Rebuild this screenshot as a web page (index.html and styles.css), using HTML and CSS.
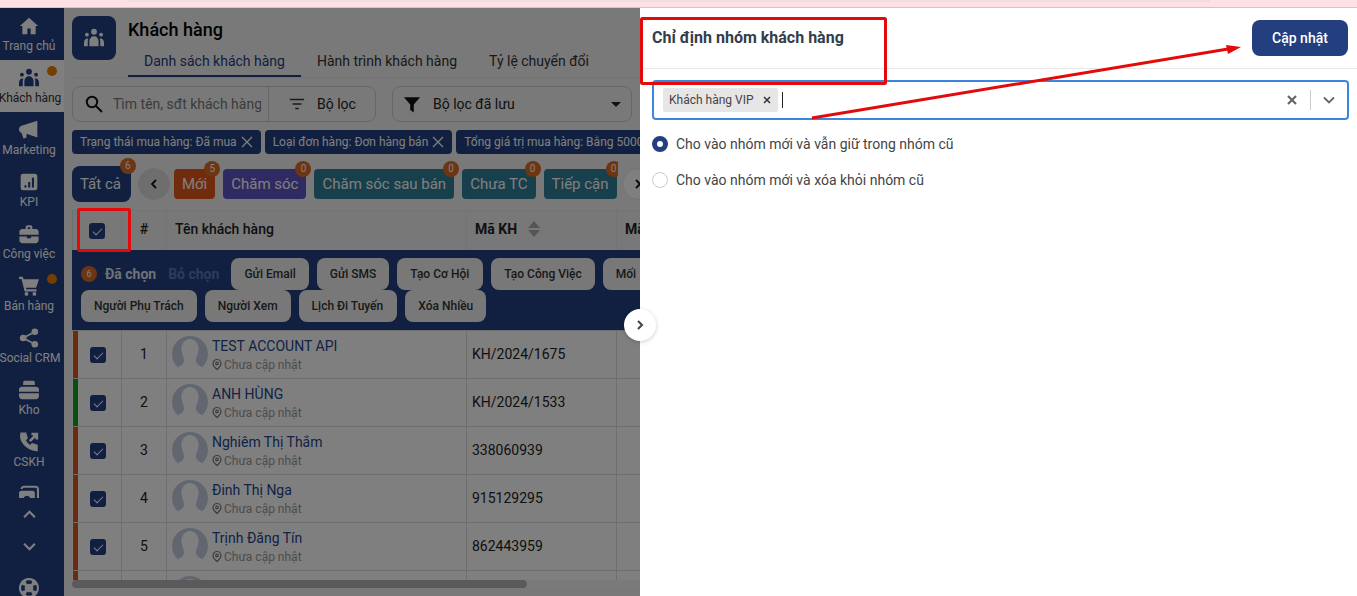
FILE: index.html
```html
<!DOCTYPE html>
<html lang="en">
<head>
  <meta charset="UTF-8">
  <meta name="viewport" content="width=device-width, initial-scale=1.0">
  <title>Khách hàng</title>
  <link rel="stylesheet" href="styles.css">
</head>
<body>
  <div class="notice"><div class="notice-bar"></div></div>

  <div class="app">
    <svg class="defs" aria-hidden="true">
      <symbol id="face" viewBox="0 0 36 36">
        <circle cx="18" cy="18" r="18" fill="#c3cde0"/>
        <path fill="#fff" d="M18 3C12.500 3 9 8 9.500 14c.4 5 3 8 2.500 11.500-.4 2.500-3 4.500-6 5.500v5h24v-5c-3-1-5.600-3-6-5.500-.5-3.500 2.100-6.500 2.500-11.500C27 8 23.500 3 18 3z"/>
      </symbol>
      <symbol id="pin" viewBox="0 0 10 12">
        <path d="M5 1a4 4 0 0 1 4 4c0 2.500-4 6-4 6S1 7.500 1 5a4 4 0 0 1 4-4z"/>
        <circle cx="5" cy="5" r="1.300"/>
      </symbol>
      <symbol id="team" viewBox="0 0 24 24">
        <circle cx="12" cy="4.500" r="3.500"/>
        <circle cx="3.500" cy="8" r="2.300"/>
        <circle cx="20.500" cy="8" r="2.300"/>
        <path d="M6.500 22v-6c0-3.500 2.500-6 5.500-6s5.500 2.500 5.500 6v6zM0 22v-4C0 14.500 1.500 12.500 4.500 12.500c.3 0 .5 0 .7.100-.5 1.200-.7 2.500-.7 3.900v5.500zM24 22v-4c0-3.500-1.500-5.500-4.500-5.500-.3 0-.5 0-.7.100.5 1.200.7 2.500.7 3.900v5.500z"/>
      </symbol>
    </svg>

    <nav class="sidebar">
      <a class="nav-item">
        <svg viewBox="0 0 24 24"><path d="M12 2 1 12h3v10h6v-7h4v7h6V12h3z"/></svg>
        <span>Trang chủ</span>
      </a>
      <a class="nav-item active wide">
        <i class="nav-dot"></i>
        <svg class="nav-team"><use href="#team"/></svg>
        <span>Khách hàng</span>
      </a>
      <a class="nav-item">
        <svg viewBox="0 0 24 24"><path d="M22 1v20L9 16.500V21l-3.500 1.500L3 15.500C1 14.500 0 13 0 11s1.500-4 4-4.500z"/></svg>
        <span>Marketing</span>
      </a>
      <a class="nav-item">
        <svg viewBox="0 0 24 24"><path fill-rule="evenodd" d="M5 2h14c2 0 3 1 3 3v14c0 2-1 3-3 3H5c-2 0-3-1-3-3V5c0-2 1-3 3-3zm1.500 14v2.500h2.500V16zm4.500-4v6.500h2.500V12zm4.500-5v11.500H18V7z"/></svg>
        <span>KPI</span>
      </a>
      <a class="nav-item">
        <svg viewBox="0 0 24 24"><path fill-rule="evenodd" d="M8 6V4c0-1.500 1-2.500 2.500-2.500h3C15 1.500 16 2.500 16 4v2h4c2 0 3.500 1.500 3.500 3.500V13H.5V9.500C.5 7.500 2 6 4 6zm2.500 0h3V4h-3zM.5 15h9v2h5v-2h9v4.500c0 2-1.500 3.500-3.500 3.500H4c-2 0-3.500-1.500-3.500-3.500z"/></svg>
        <span>Công việc</span>
      </a>
      <a class="nav-item">
        <i class="nav-dot"></i>
        <svg viewBox="0 0 24 24"><path d="M0 1h4.500l1 3H24l-3.500 10H8.300l.5 2H21v2.500H6.800L3 3.500H0z"/><circle cx="9" cy="21.500" r="2.300"/><circle cx="18.500" cy="21.500" r="2.300"/></svg>
        <span>Bán hàng</span>
      </a>
      <a class="nav-item wide">
        <svg viewBox="0 0 24 24"><circle cx="19" cy="4.500" r="4"/><circle cx="5" cy="12" r="4"/><circle cx="19" cy="19.500" r="4"/><path d="M5 12 19 4.500M5 12l14 7.500" fill="none" stroke="currentColor" stroke-width="2.200"/></svg>
        <span>Social CRM</span>
      </a>
      <a class="nav-item">
        <svg viewBox="0 0 24 24"><path d="M7 1h10c1.500 0 2 1 2 2v3H5V3c0-1 .5-2 2-2zM4 8h16c2.500 0 4 1.500 4 3.500V14H0v-2.500C0 9.500 1.500 8 4 8zM0 16h24v2.500c0 2.500-1.500 4.500-4 4.500H4c-2.500 0-4-2-4-4.500z"/></svg>
        <span>Kho</span>
      </a>
      <a class="nav-item">
        <svg viewBox="0 0 24 24" fill="none" stroke="currentColor" stroke-width="3"><path d="M3 2c-1.500 9 6 18.500 18 19.500v-5l-5-1.500-2.500 2.500C10 15.500 8 13 6.500 9.500L9 7 7.500 2z"/><path d="M13 11l8-8M15 2.500h6.500V9"/></svg>
        <span>CSKH</span>
      </a>
      <a class="nav-item nav-clipped">
        <svg viewBox="0 0 24 24"><path fill-rule="evenodd" d="M6 2h14c2.500 0 4 1.500 4 4v12h-2.500V6c0-1-.5-1.500-1.500-1.500H6C5 4.500 4.500 5 4.500 6H2c0-2.500 1.500-4 4-4zM3 8h13c2.500 0 3 1.500 3 3v9H0v-9c0-1.500 1-3 3-3zm6.500 6a4 4 0 1 0 .1 0z"/></svg>
      </a>
      <div class="nav-arrows">
        <svg viewBox="0 0 16 10"><path d="M2 8l6-6 6 6"/></svg>
        <svg viewBox="0 0 16 10"><path d="M2 2l6 6 6-6"/></svg>
      </div>
      <div class="nav-help">
        <svg viewBox="0 0 24 24"><path fill-rule="evenodd" d="M12 0a12 12 0 1 1-.1 0zm-4 3.500 1.500 4a5 5 0 0 1 5 0l1.500-4a9.500 9.500 0 0 0-8 0zM3.500 8a9.500 9.500 0 0 0 0 8l4-1.500a5 5 0 0 1 0-5zm17 0-4 1.500a5 5 0 0 1 0 5l4 1.500a9.500 9.500 0 0 0 0-8zm-11 8.500-1.500 4a9.500 9.500 0 0 0 8 0l-1.500-4a5 5 0 0 1-5 0z"/></svg>
      </div>
    </nav>

    <main class="main">
      <header class="page-head">
        <div class="page-icon">
          <svg><use href="#team"/></svg>
        </div>
        <div class="page-title">
          <h1>Khách hàng</h1>
          <div class="tabs">
            <a class="tab active">Danh sách khách hàng</a>
            <a class="tab">Hành trình khách hàng</a>
            <a class="tab">Tỷ lệ chuyển đổi</a>
          </div>
        </div>
      </header>
      <div class="head-line"></div>

      <div class="toolbar">
        <div class="search">
          <div class="search-input">
            <svg viewBox="0 0 18 18"><circle cx="7" cy="7" r="5.200"/><path d="M11 11l6 6"/></svg>
            <span class="search-text">Tìm tên, sđt khách hàng</span>
          </div>
          <div class="filter-btn">
            <svg viewBox="0 0 18 14"><path d="M1 2h16M4 7h10M7 12h4"/></svg>
            <span>Bộ lọc</span>
          </div>
        </div>
        <div class="saved">
          <svg viewBox="0 0 20 20"><path d="M1 2h18l-7 8v9l-4-3v-6z"/></svg>
          <span>Bộ lọc đã lưu</span>
          <i class="caret"></i>
        </div>
      </div>

      <div class="chips">
        <div class="chip">Trạng thái mua hàng: Đã mua <svg viewBox="0 0 12 12"><path d="M1 1l10 10M11 1 1 11"/></svg></div>
        <div class="chip">Loại đơn hàng: Đơn hàng bán <svg viewBox="0 0 12 12"><path d="M1 1l10 10M11 1 1 11"/></svg></div>
        <div class="chip">Tổng giá trị mua hàng: Bằng 5000000 <svg viewBox="0 0 12 12"><path d="M1 1l10 10M11 1 1 11"/></svg></div>
      </div>

      <div class="stages">
        <div class="stage all">Tất cả<b class="count">6</b></div>
        <div class="round-btn gray"><svg viewBox="0 0 8 10"><path d="M6 1 2 5l4 4"/></svg></div>
        <div class="stage-track">
          <div class="stage new">Mới<b class="count">5</b></div>
          <div class="stage care">Chăm sóc<b class="count">0</b></div>
          <div class="stage teal">Chăm sóc sau bán<b class="count">0</b></div>
          <div class="stage teal">Chưa TC<b class="count">0</b></div>
          <div class="stage teal">Tiếp cận<b class="count">0</b></div>
        </div>
        <div class="round-btn"><svg viewBox="0 0 8 10"><path d="M2 1l4 4-4 4"/></svg></div>
      </div>

      <div class="grid">
        <div class="row head">
          <div class="cell c-check"><i class="check"></i></div>
          <div class="cell c-num">#</div>
          <div class="cell c-name">Tên khách hàng</div>
          <div class="cell c-code">Mã KH <span class="sort"><i></i><i></i></span></div>
          <div class="cell c-next">Mã</div>
        </div>
        <div class="bulk">
          <div class="bulk-row">
            <b class="bulk-count">6</b>
            <b class="bulk-on">Đã chọn</b>
            <b class="bulk-off">Bỏ chọn</b>
            <a class="bulk-btn">Gửi Email</a>
            <a class="bulk-btn">Gửi SMS</a>
            <a class="bulk-btn wide">Tạo Cơ Hội</a>
            <a class="bulk-btn">Tạo Công Việc</a>
            <a class="bulk-btn spaced">Mối Quan Hệ</a>
          </div>
          <div class="bulk-row">
            <a class="bulk-btn">Người Phụ Trách</a>
            <a class="bulk-btn">Người Xem</a>
            <a class="bulk-btn wide">Lịch Đi Tuyến</a>
            <a class="bulk-btn">Xóa Nhiều</a>
          </div>
        </div>
        <div class="rows">
          <div class="row">
            <div class="cell c-check mark-orange"><i class="check"></i></div>
            <div class="cell c-num">1</div>
            <div class="cell c-name"><svg class="avatar"><use href="#face"/></svg><div class="who"><p class="cust">TEST ACCOUNT API</p><p class="addr"><svg><use href="#pin"/></svg>Chưa cập nhật</p></div></div>
            <div class="cell c-code">KH/2024/1675</div>
            <div class="cell c-next"></div>
          </div>
          <div class="row">
            <div class="cell c-check mark-green"><i class="check"></i></div>
            <div class="cell c-num">2</div>
            <div class="cell c-name"><svg class="avatar"><use href="#face"/></svg><div class="who"><p class="cust">ANH HÙNG</p><p class="addr"><svg><use href="#pin"/></svg>Chưa cập nhật</p></div></div>
            <div class="cell c-code">KH/2024/1533</div>
            <div class="cell c-next"></div>
          </div>
          <div class="row">
            <div class="cell c-check mark-orange"><i class="check"></i></div>
            <div class="cell c-num">3</div>
            <div class="cell c-name"><svg class="avatar"><use href="#face"/></svg><div class="who"><p class="cust">Nghiêm Thị Thắm</p><p class="addr"><svg><use href="#pin"/></svg>Chưa cập nhật</p></div></div>
            <div class="cell c-code">338060939</div>
            <div class="cell c-next"></div>
          </div>
          <div class="row">
            <div class="cell c-check mark-orange"><i class="check"></i></div>
            <div class="cell c-num">4</div>
            <div class="cell c-name"><svg class="avatar"><use href="#face"/></svg><div class="who"><p class="cust">Đinh Thị Nga</p><p class="addr"><svg><use href="#pin"/></svg>Chưa cập nhật</p></div></div>
            <div class="cell c-code">915129295</div>
            <div class="cell c-next"></div>
          </div>
          <div class="row">
            <div class="cell c-check mark-orange"><i class="check"></i></div>
            <div class="cell c-num">5</div>
            <div class="cell c-name"><svg class="avatar"><use href="#face"/></svg><div class="who"><p class="cust">Trịnh Đăng Tín</p><p class="addr"><svg><use href="#pin"/></svg>Chưa cập nhật</p></div></div>
            <div class="cell c-code">862443959</div>
            <div class="cell c-next"></div>
          </div>
          <div class="row">
            <div class="cell c-check mark-orange"></div>
            <div class="cell c-num"></div>
            <div class="cell c-name"><svg class="avatar"><use href="#face"/></svg></div>
            <div class="cell c-code"></div>
            <div class="cell c-next"></div>
          </div>
        </div>
        <div class="scrollbar"><div class="thumb"></div></div>
      </div>
    </main>

    <div class="backdrop"></div>

    <aside class="drawer">
      <button class="drawer-toggle"><svg viewBox="0 0 8 12"><path d="M2 2l4 4-4 4"/></svg></button>
      <div class="drawer-head">
        <h2>Chỉ định nhóm khách hàng</h2>
        <button class="save-btn">Cập nhật</button>
      </div>
      <div class="drawer-body">
        <div class="select">
          <div class="tag">Khách hàng VIP <svg viewBox="0 0 8 8"><path d="M1 1l6 6M7 1 1 7"/></svg></div>
          <i class="cursor"></i>
          <div class="select-tools">
            <svg class="clear" viewBox="0 0 10 10"><path d="M1 1l8 8M9 1 1 9"/></svg>
            <i class="tool-line"></i>
            <svg class="open" viewBox="0 0 12 8"><path d="M1 1.500l5 5 5-5"/></svg>
          </div>
        </div>
        <label class="radio on"><i></i>Cho vào nhóm mới và vẫn giữ trong nhóm cũ</label>
        <label class="radio"><i></i>Cho vào nhóm mới và xóa khỏi nhóm cũ</label>
      </div>
    </aside>

    <!-- red marks someone drew over the screenshot -->
    <svg class="marks" viewBox="0 0 1357 588">
      <rect x="641.500" y="10.500" width="244" height="65" rx="1"/>
      <rect x="78.500" y="201.500" width="51" height="41" rx="1"/>
      <path d="M812 110 1228 41"/>
      <path class="head-mark" d="M1241 39 1226 37 1228 46z"/>
    </svg>
  </div>
</body>
</html>
```
FILE: styles.css
```css
* {
  box-sizing: border-box;
}
html, body {
  height: 100%;
}
body {
  margin: 0;
  overflow: hidden;
  font-family: Roboto, "Noto Sans", sans-serif;
  font-size: 14px;
  color: #222;
  background: #fff;
}
p, h1, h2 {
  margin: 0;
}
.defs {
  position: absolute;
  width: 0;
  height: 0;
}

/* top strip */
.notice {
  height: 8px;
  background: #ffe0e4;
  border-bottom: 1px solid #d9c3c7;
}
.notice-bar {
  width: 1083px;
  height: 2px;
  margin-left: 127px;
  background: #efdde0;
}

.app {
  position: relative;
  display: flex;
  height: 588px;
  overflow: hidden;
}

/* sidebar */
.sidebar {
  flex: none;
  width: 64px;
  height: 588px;
  background: #233f80;
  color: #fff;
  overflow: hidden;
}
.nav-item {
  position: relative;
  display: flex;
  flex-direction: column;
  align-items: center;
  height: 52px;
  padding: 8px 6px 0 0;
  font-size: 12px;
  line-height: 14px;
  white-space: nowrap;
}
.nav-item svg {
  width: 20px;
  height: 20px;
  margin-bottom: 2px;
  fill: currentColor;
  flex: none;
}
.nav-item svg.nav-team {
  width: 22px;
}
.nav-item span {
  line-height: 16px;
}
.nav-item.wide span {
  margin-left: 2px;
  letter-spacing: -.05px;
}
.nav-item.active {
  background: #fff;
  color: #23407f;
}
.nav-item.active span {
  color: #333;
}
.nav-dot {
  position: absolute;
  top: 6px;
  right: 7px;
  width: 10px;
  height: 10px;
  border-radius: 50%;
  background: #e67e00;
}
.nav-clipped {
  height: 22px;
  overflow: hidden;
}
.nav-arrows {
  display: flex;
  flex-direction: column;
  align-items: center;
  gap: 23px;
  padding: 12px 6px 0 0;
}
.nav-arrows svg {
  width: 15px;
  height: 9px;
  fill: none;
  stroke: #fff;
  stroke-width: 2.400;
}
.nav-help {
  display: flex;
  justify-content: center;
  margin-top: 27px;
  padding-right: 6px;
}
.nav-help svg {
  flex: none;
  width: 20px;
  height: 20px;
  fill: #fff;
}

/* main column */
.main {
  flex: none;
  width: 800px;
  height: 588px;
  background: #f3f3f3;
  overflow: hidden;
}
.page-head {
  display: flex;
  gap: 12px;
  padding: 8px 8px 0;
}
.page-icon {
  display: flex;
  align-items: center;
  justify-content: center;
  width: 44px;
  height: 44px;
  border-radius: 8px;
  background: #233f80;
}
.page-icon svg {
  width: 20px;
  height: 20px;
  fill: #fff;
}
.page-title h1 {
  font-size: 18px;
  font-weight: 500;
  line-height: 28px;
  color: #000;
}
.tabs {
  display: flex;
  margin-top: 1px;
}
.tab {
  padding: 0 16px;
  height: 32px;
  line-height: 32px;
  font-size: 14px;
  color: #333;
}
.tab.active {
  color: #23407f;
  border-bottom: 2px solid #23407f;
}
.head-line {
  height: 1px;
  margin-left: 8px;
  background: #e4e4e4;
}
.toolbar {
  display: flex;
  gap: 16px;
  padding: 8px 8px 0;
}
.search {
  display: flex;
  align-items: center;
  width: 304px;
  height: 36px;
  border: 1px solid #ccc;
  border-radius: 8px;
}
.search-input {
  display: flex;
  align-items: center;
  gap: 10px;
  flex: none;
  width: 196px;
  height: 100%;
  padding-left: 12px;
  border-right: 1px solid #ccc;
  overflow: hidden;
}
.search-input svg {
  flex: none;
  width: 18px;
  height: 18px;
  fill: none;
  stroke: #111;
  stroke-width: 2;
}
.search-text {
  flex: none;
  width: 148px;
  overflow: hidden;
  color: #777;
  white-space: nowrap;
}
.filter-btn {
  display: flex;
  align-items: center;
  gap: 12px;
  padding-left: 20px;
  color: #222;
}
.filter-btn svg {
  width: 16px;
  height: 14px;
  fill: none;
  stroke: #333;
  stroke-width: 1.800;
}
.saved {
  display: flex;
  align-items: center;
  gap: 12px;
  width: 240px;
  height: 36px;
  padding: 0 10px;
  border: 1px solid #ccc;
  border-radius: 8px;
}
.saved svg {
  width: 18px;
  height: 19px;
  fill: #111;
}
.caret {
  margin-left: auto;
  border: 5px solid transparent;
  border-top: 5px solid #222;
  border-bottom: 0;
}
.chips {
  display: flex;
  gap: 4px;
  padding: 8px 8px 0;
  white-space: nowrap;
}
.chip {
  display: flex;
  align-items: center;
  gap: 4px;
  flex: none;
  height: 24px;
  padding: 0 8px;
  border-radius: 4px;
  background: #233f80;
  color: #fff;
  font-size: 12px;
}
.chip svg {
  width: 12px;
  height: 12px;
  fill: none;
  stroke: #fff;
  stroke-width: 1.300;
}
.stages {
  display: flex;
  align-items: center;
  height: 44px;
  margin-top: 4px;
  padding: 8px 0 0 8px;
  white-space: nowrap;
}
.stage-track {
  display: flex;
  align-items: center;
  gap: 8px;
  flex: none;
  width: 444px;
  margin: -8px 4px 0 4px;
  padding-top: 8px;
  overflow: hidden;
}
.stage {
  position: relative;
  flex: none;
  height: 30px;
  padding: 0 8px;
  border-radius: 4px;
  color: #fff;
  font-size: 15px;
  line-height: 30px;
}
.stage.all {
  height: 36px;
  margin-right: 7px;
  padding: 0 10px 0 8px;
  border-radius: 8px;
  background: #233f80;
  line-height: 36px;
}
.stage.new {
  background: #e2571b;
}
.stage.care {
  background: #5f54c4;
}
.stage.teal {
  background: #307e98;
}
.count {
  position: absolute;
  top: -8px;
  right: -5px;
  width: 16px;
  height: 16px;
  border-radius: 50%;
  background: #dd6a24;
  font-size: 10px;
  font-weight: 400;
  line-height: 16px;
  text-align: center;
}
.round-btn {
  display: flex;
  align-items: center;
  justify-content: center;
  flex: none;
  width: 32px;
  height: 32px;
  border-radius: 50%;
  border: 1px solid #e4e4e4;
  background: #fff;
}
.round-btn.gray {
  background: #ddd;
  border-color: #ddd;
}
.round-btn svg {
  width: 8px;
  height: 10px;
  fill: none;
  stroke: #111;
  stroke-width: 1.800;
}

/* table */
.grid {
  margin: 8px 0 0 8px;
  width: 760px;
}
.row {
  display: flex;
  height: 48px;
  background: #fff;
  border-bottom: 1px solid #ddd;
}
.row.head {
  height: 40px;
  background: #f0f0f0;
  border: 0;
  font-weight: 500;
  border-top: 1px solid #e8e8e8;
}
.cell {
  display: flex;
  align-items: center;
  flex: none;
  padding-bottom: 1px;
  border-right: 1px solid #ddd;
}
.row.head .cell {
  padding-bottom: 3px;
  border-right-color: #e8e8e8;
}
.c-check {
  justify-content: center;
  width: 50px;
  border-left: 1px solid #ddd;
}
.row .c-check {
  padding-bottom: 0;
}
.row.head .c-check {
  padding-bottom: 0;
}
.mark-orange, .mark-green {
  width: 49px;
  margin-left: 1px;
  padding-right: 4px;
}
.c-num {
  justify-content: center;
  width: 45px;
}
.c-name {
  gap: 4px;
  width: 300px;
  padding-left: 5px;
}
.head .c-name {
  padding-left: 8px;
}
.c-code {
  width: 150px;
  padding-left: 5px;
}
.head .c-code {
  padding-left: 8px;
  gap: 11px;
  font-weight: 700;
}
.c-next {
  width: 150px;
  padding-left: 8px;
}
.head .c-next {
  font-weight: 700;
}
.mark-orange {
  border-left: 5px solid #d9541c;
}
.mark-green {
  border-left: 5px solid #12a020;
}
.check {
  position: relative;
  display: block;
  width: 16px;
  height: 16px;
  border-radius: 3px;
  background: #233f80;
}
.check::after {
  content: "";
  position: absolute;
  left: 6px;
  top: 3px;
  width: 4px;
  height: 8px;
  border: solid #fff;
  border-width: 0 1.500px 1.500px 0;
  transform: rotate(45deg);
}
.sort i {
  display: block;
  border: 6px solid transparent;
  border-bottom: 7px solid #aaa;
  border-top: 0;
  margin-bottom: 2px;
}
.sort i + i {
  border-bottom: 0;
  border-top: 7px solid #aaa;
  margin-bottom: 0;
}
.bulk {
  display: flex;
  flex-direction: column;
  height: 80px;
  padding: 8px 9px;
  background: #233f80;
}
.bulk-row {
  display: flex;
  align-items: center;
  gap: 8px;
  height: 32px;
  white-space: nowrap;
}
.bulk-count {
  flex: none;
  width: 16px;
  height: 16px;
  border-radius: 50%;
  background: #dd6a24;
  color: #fff;
  font-size: 9px;
  font-weight: 400;
  line-height: 16px;
  text-align: center;
}
.bulk-on {
  color: #fff;
  font-size: 14px;
  font-weight: 700;
  opacity: .85;
}
.bulk-off {
  margin: 0 4px;
  color: #5d76b5;
  font-size: 14px;
  font-weight: 700;
}
.bulk-btn {
  display: block;
  flex: none;
  height: 32px;
  padding: 0 13px;
  border-radius: 8px;
  background: #f1f1f1;
  color: #333;
  font-size: 12px;
  font-weight: 500;
  line-height: 32px;
}
.bulk-btn.wide {
  padding-right: 14px;
}
.bulk-btn.spaced {
  word-spacing: 5px;
}
.avatar {
  flex: none;
  display: block;
  width: 36px;
  height: 36px;
}
.who {
  padding-top: 2px;
}
.cust {
  font-size: 14px;
  line-height: 18px;
  color: #26458c;
  white-space: nowrap;
}
.addr {
  display: flex;
  align-items: center;
  gap: 2px;
  margin-top: 1px;
  font-size: 12px;
  line-height: 18px;
  color: #999;
}
.addr svg {
  width: 10px;
  height: 13px;
  fill: none;
  stroke: #777;
  stroke-width: 1.200;
}
.rows {
  height: 250px;
  padding-top: 1px;
  background: #ddd;
  overflow: hidden;
}
.scrollbar {
  height: 8px;
  background: #f4f4f4;
}
.thumb {
  width: 455px;
  height: 8px;
  border-radius: 4px;
  background: #b5b5b5;
}

/* dim layer and drawer sit over the page */
.backdrop {
  position: absolute;
  inset: 0;
  background: rgba(0, 0, 0, .5);
}
.drawer {
  position: absolute;
  top: 0;
  right: 0;
  bottom: 0;
  width: 717px;
  background: #fff;
}
.drawer-toggle {
  position: absolute;
  left: -16px;
  top: 301px;
  display: flex;
  align-items: center;
  justify-content: center;
  width: 32px;
  height: 32px;
  padding: 0;
  border: 0;
  border-radius: 50%;
  background: #fff;
  box-shadow: 0 1px 4px rgba(0, 0, 0, .2);
}
.drawer-toggle svg {
  width: 8px;
  height: 12px;
  fill: none;
  stroke: #444;
  stroke-width: 2;
}
.drawer-head {
  display: flex;
  align-items: flex-start;
  justify-content: space-between;
  height: 61px;
  padding: 12px 9px 0 12px;
  border-bottom: 1px solid #e8e8e8;
}
.drawer-head h2 {
  margin-top: 8px;
  font-size: 16px;
  font-weight: 700;
  line-height: 20px;
  color: #333d4d;
}
.save-btn {
  width: 96px;
  height: 36px;
  border: 0;
  border-radius: 8px;
  background: #233f80;
  color: #fff;
  font-family: inherit;
  font-size: 14px;
  font-weight: 500;
}
.drawer-body {
  padding: 11px 8px 0 12px;
}
.select {
  display: flex;
  align-items: center;
  height: 40px;
  padding-left: 9px;
  border: 2px solid #3b87e0;
  border-radius: 4px;
}
.tag {
  display: flex;
  align-items: center;
  gap: 9px;
  height: 24px;
  padding: 0 7px 0 6px;
  border-radius: 2px;
  background: #e6e6e6;
  color: #444;
  font-size: 12px;
}
.tag svg {
  width: 8px;
  height: 8px;
  fill: none;
  stroke: #333;
  stroke-width: 1.500;
}
.cursor {
  width: 1px;
  height: 16px;
  margin-left: 4px;
  background: #222;
}
.select-tools {
  display: flex;
  align-items: center;
  margin-left: auto;
  padding-right: 12px;
}
.clear {
  width: 10px;
  height: 10px;
  fill: none;
  stroke: #666;
  stroke-width: 2.200;
}
.tool-line {
  width: 1px;
  height: 20px;
  margin: 0 12px 0 13px;
  background: #ccc;
}
.open {
  width: 12px;
  height: 8px;
  fill: none;
  stroke: #666;
  stroke-width: 1.800;
}
.radio {
  display: flex;
  align-items: center;
  gap: 8px;
  height: 36px;
  color: #444;
  font-size: 14px;
}
.select + .radio {
  margin-top: 6px;
}
.radio i {
  width: 16px;
  height: 16px;
  border: 1px solid #ccc;
  border-radius: 50%;
}
.radio.on i {
  border: 5px solid #233f80;
}

.marks {
  position: absolute;
  left: 0;
  top: 0;
  width: 1357px;
  height: 588px;
  fill: none;
  stroke: #e20a0a;
  stroke-width: 3;
  pointer-events: none;
}
.head-mark {
  fill: #e20a0a;
  stroke: none;
}
```
